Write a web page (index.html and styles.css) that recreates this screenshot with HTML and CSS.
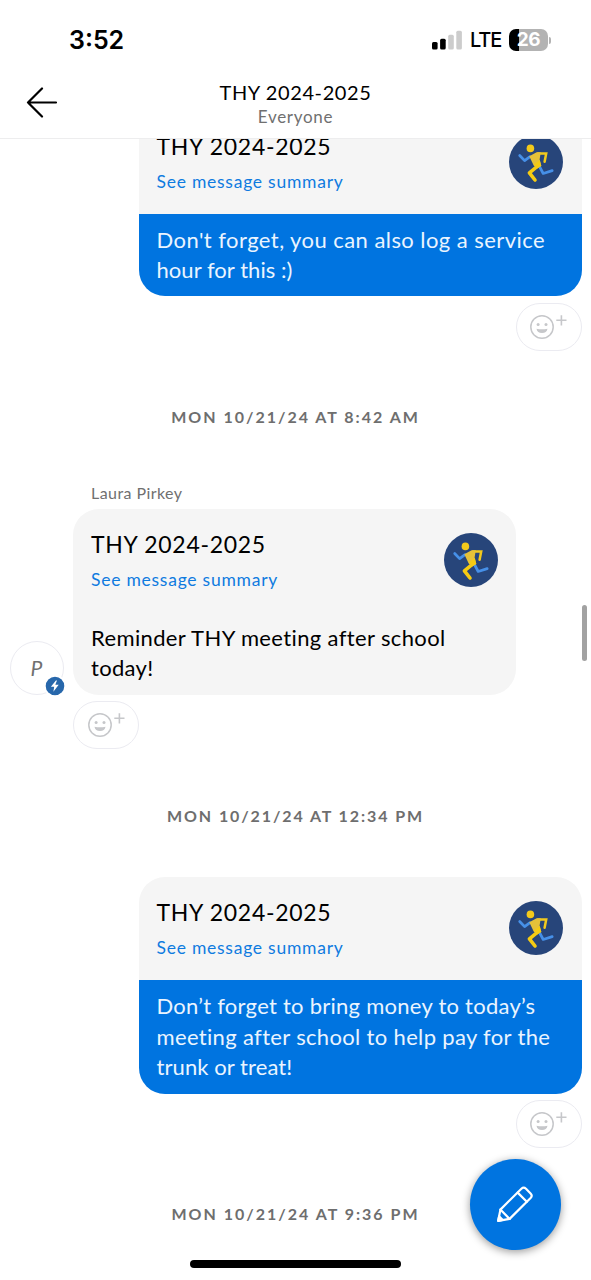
FILE: index.html
```html
<!DOCTYPE html>
<html lang="en">
<head>
<meta charset="utf-8">
<title>THY 2024-2025</title>
<link rel="stylesheet" href="styles.css">
</head>
<body>
<svg class="symbols" aria-hidden="true">
  <symbol id="runner" viewBox="0 0 54 54">
    <circle cx="27" cy="27" r="27" fill="#27457a"/>
    <g fill="none" stroke-linejoin="round">
      <path d="M10.7 20.5 15.6 25.6 21 21.6M31 32.5l3.2 6 9-2.9" stroke="#4690e8" stroke-width="2.7" stroke-linecap="round"/>
      <path d="M29 18.5h8.2l-1.6 8.2" stroke="#f2c91d" stroke-width="2.5" stroke-linejoin="miter" stroke-linecap="round"/>
      <path d="M29.8 30.2 20.4 37.8 26 45" stroke="#f5cb13" stroke-width="3.6" stroke-linecap="round"/>
    </g>
    <path d="M20.3 21.3 27.6 17.3h4.2L30.6 24.5 32.4 31 28 33.2 24.7 30.5z" fill="#e5c139"/>
    <path d="M25 29.5 30.8 25 32.2 31 28 33.5z" fill="#f5cb13"/>
    <circle cx="21.4" cy="13.4" r="3.8" fill="#f3ca1b"/>
  </symbol>
  <symbol id="smile" viewBox="0 0 38 26">
    <circle cx="13" cy="14" r="11.2" fill="none" stroke="#c6c7ca" stroke-width="1.5"/>
    <circle cx="9.1" cy="11.5" r="1.5" fill="#c6c7ca"/>
    <circle cx="17" cy="11.5" r="1.5" fill="#c6c7ca"/>
    <path d="M7.5 15.7q5.5 1.2 11 0-.8 4.4-5.5 4.4t-5.5-4.4z" fill="#c6c7ca"/>
    <path d="M27.3 7.3h10.2M32.4 2.2v10.2" stroke="#c6c7ca" stroke-width="1.6"/>
  </symbol>
</svg>

<div class="phone">
  <header class="top">
    <div class="status">
      <span class="clock">3:52</span>
      <div class="indicators">
        <svg class="signal" viewBox="0 0 31 20">
          <rect x="0" y="12" width="5.6" height="7.5" rx="1.5"/>
          <rect x="8.1" y="8.8" width="5.6" height="10.7" rx="1.5"/>
          <rect x="16.2" y="4.8" width="5.6" height="14.7" rx="1.5" fill="#ccc"/>
          <rect x="24.3" y="0.7" width="5.6" height="18.8" rx="1.5" fill="#ccc"/>
        </svg>
        <span class="network">LTE</span>
        <span class="battery">26</span>
        <span class="battery-tip"></span>
      </div>
    </div>
    <nav class="nav">
      <svg class="back" viewBox="0 0 32 32"><path d="M30 16.5H2M16 2.5 2 16.5 16 30.5" fill="none" stroke="#000" stroke-width="2.2" stroke-linecap="round" stroke-linejoin="round"/></svg>
      <div class="heading">
        <h1 class="heading-title">THY 2024-2025</h1>
        <p class="heading-sub">Everyone</p>
      </div>
    </nav>
  </header>

  <main class="thread">
    <section class="message sent first">
      <div class="bubble">
        <div class="card">
          <div><h2 class="title">THY 2024-2025</h2><a class="summary">See message summary</a></div>
          <svg class="logo"><use href="#runner"/></svg>
        </div>
        <p class="text"><span class="l1">Don't forget, you can also log a service</span><br><span class="l2">hour for this :)</span></p>
      </div>
      <div class="react"><svg class="smile"><use href="#smile"/></svg></div>
    </section>

    <time class="date d1">MON 10/21/24 AT 8:42 AM</time>

    <section class="message received">
      <div class="sender">Laura Pirkey</div>
      <div class="row">
        <div class="avatar">P
          <svg class="badge" viewBox="0 0 20 20"><circle cx="10" cy="10" r="9.3" fill="#2767ab"/><path d="M10.9 4.5 5.9 10.8h3.3l-.8 4.9 5.3-6.9h-3.4l1.7-4.3z" fill="#fff"/></svg>
        </div>
        <div class="bubble">
          <div class="card">
            <div><h2 class="title">THY 2024-2025</h2><a class="summary">See message summary</a></div>
            <svg class="logo"><use href="#runner"/></svg>
          </div>
          <p class="text"><span class="l3">Reminder THY meeting after school</span><br><span class="l4">today!</span></p>
        </div>
      </div>
      <div class="react"><svg class="smile"><use href="#smile"/></svg></div>
    </section>

    <time class="date d2">MON 10/21/24 AT 12:34 PM</time>

    <section class="message sent">
      <div class="bubble">
        <div class="card">
          <div><h2 class="title">THY 2024-2025</h2><a class="summary">See message summary</a></div>
          <svg class="logo"><use href="#runner"/></svg>
        </div>
        <p class="text"><span class="l5">Don’t forget to bring money to today’s</span><br><span class="l6">meeting after school to help pay for the</span><br><span class="l7">trunk or treat!</span></p>
      </div>
      <div class="react"><svg class="smile"><use href="#smile"/></svg></div>
    </section>

    <time class="date d3">MON 10/21/24 AT 9:36 PM</time>
  </main>

  <div class="scrollbar"></div>
  <button class="compose" aria-label="Compose">
    <svg class="pencil" viewBox="0 0 40 40" fill="none" stroke="#fff" stroke-width="2.2" stroke-linejoin="round" stroke-linecap="round">
      <path d="M3.2 36.8 5.4 25.6 26.4 4.7q2.3-2.2 4.6 0l4.6 4.7q2.2 2.3 0 4.6L14.6 34.9z"/>
      <path d="M5.4 25.6 14.6 34.9M22.7 8.6l9.1 9.1"/>
      <path d="M3.2 36.8 4.1 32.4 7.8 36z" fill="#fff"/>
    </svg>
  </button>
  <div class="home"></div>
</div>
</body>
</html>
```
FILE: styles.css
```css
* { box-sizing: border-box; }
body { margin: 0; background: #fff; color: #000; font-family: Lato, sans-serif; font-variant-ligatures: none; }
h1, h2, p { margin: 0; font-weight: 400; }
.symbols { position: absolute; width: 0; height: 0; }

.phone { position: relative; width: 591px; height: 1280px; overflow: hidden; display: flex; flex-direction: column; background: #fff; }

.top { flex: none; height: 139px; border-bottom: 1px solid #ededee; background: #fff; }
.status { height: 78px; padding: 2px 40px 0 69px; display: flex; align-items: center; justify-content: space-between; }
.clock { font: 600 25px/30px Inter, sans-serif; letter-spacing: 0; white-space: nowrap; }
.indicators { display: flex; align-items: center; height: 24px; }
.signal { width: 31px; height: 20px; margin-right: 7px; }
.network { width: 39px; font: 500 20px/24px Inter, sans-serif; letter-spacing: -1.1px; }
.battery { width: 39px; height: 22px; margin-top: -1px; border-radius: 7px; background: linear-gradient(90deg, #000 10.5px, #b3b3b3 10.5px); color: #fff; font: 700 19px/22px Inter, sans-serif; text-align: center; letter-spacing: -0.3px; }
.battery-tip { width: 2px; height: 7px; margin-left: 1px; border-radius: 0 3px 3px 0; background: #b3b3b3; }

.nav { height: 60px; padding: 2px 26px 0; display: grid; grid-template-columns: 32px 1fr 32px; }
.back { width: 32px; height: 32px; margin-top: 6px; }
.heading { text-align: center; white-space: nowrap; }
.heading-title { font-size: 20px; line-height: 25px; letter-spacing: 0.6px; }
.heading-sub { font-size: 17px; line-height: 24px; color: #707070; letter-spacing: 0.7px; }

.thread { flex: 1; min-height: 0; overflow: hidden; display: flex; flex-direction: column; }
.message { flex: none; display: flex; flex-direction: column; padding: 0 9.5px; }
.message.first { margin-top: -28px; }
.bubble { width: 443px; border-radius: 26px; overflow: hidden; background: #f5f5f5; }
.card { height: 103px; padding: 19.5px 18.5px 0 18px; display: flex; justify-content: space-between; }
.title { font-size: 23px; line-height: 30px; letter-spacing: 0.7px; white-space: nowrap; }
.summary { display: block; margin-top: 9px; font-size: 17.5px; line-height: 24px; letter-spacing: 0.75px; color: #0f7be0; white-space: nowrap; }
.logo { width: 54px; height: 54px; margin-top: 4px; }
.text { padding: 11px 18px; font-size: 22px; line-height: 30.5px; white-space: nowrap; }
.first .text { padding: 10.5px 18px; }
.react { width: 66px; height: 48px; margin-top: 6.5px; border: 1.5px solid #ebebf1; border-radius: 24px; padding: 9px 0 0 12.8px; }
.smile { display: block; width: 38px; height: 26px; }

.l1 { letter-spacing: 0.44px; }
.l2 { letter-spacing: 0.05px; }
.l3 { letter-spacing: 0.37px; }
.l4 { letter-spacing: 0.3px; }
.l5 { letter-spacing: 0.26px; }
.l6 { letter-spacing: 0.34px; }
.l7 { letter-spacing: 0.08px; }

.sent { align-items: flex-end; }
.sent .text { background: #0074e0; color: #eaf4ff; }
.received .bubble { height: 185.5px; }
.received .text { padding-top: 10.5px; }
.received .react { margin-left: 63.5px; }

.sender { height: 25px; margin: 0 0 3px 81.5px; font-size: 16px; line-height: 23px; letter-spacing: 0.43px; color: #707070; }
.row { display: flex; align-items: flex-end; gap: 9.5px; }
.avatar { position: relative; width: 54px; height: 54px; border: 1.5px solid #ebebf1; border-radius: 50%; color: #707070; font-size: 21px; font-style: italic; line-height: 51px; text-align: center; }
.badge { position: absolute; right: -3px; bottom: -3px; width: 22px; height: 22px; padding: 1px; border-radius: 50%; background: #fff; }

.date { flex: none; text-align: center; font-size: 16px; font-weight: 700; line-height: 20px; color: #6e6e6e; letter-spacing: 2px; }
.d1 { margin: 56px 0 54.5px; }
.d2 { margin: 57px 0 51px; letter-spacing: 1.9px; }
.d3 { margin-top: 56px; }

.scrollbar { position: absolute; right: 4px; top: 605px; width: 5px; height: 56px; border-radius: 3px; background: #a2a2a2; }
.compose { position: absolute; left: 469.5px; top: 1158.5px; width: 91px; height: 91px; border: 0; padding: 0; border-radius: 50%; background: #0074e0; box-shadow: 0 2px 8px rgba(0,0,0,.4); display: grid; place-items: center; }
.pencil { width: 40px; height: 40px; }
.home { position: absolute; left: 190px; top: 1260px; width: 211px; height: 8px; border-radius: 4px; background: #000; }
```
